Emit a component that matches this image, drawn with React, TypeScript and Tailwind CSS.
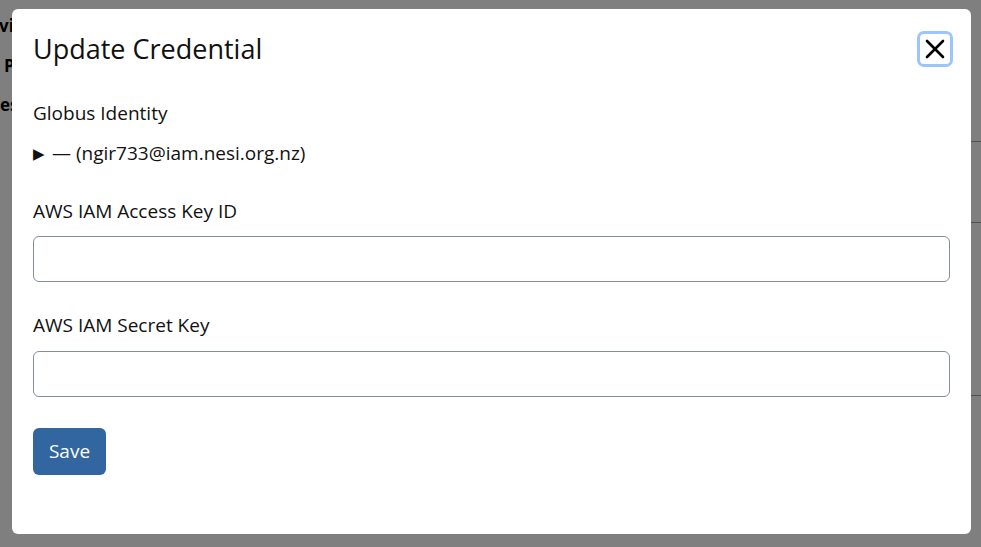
import React from "react";

export default function App() {
  const font = { fontFamily: "'Open Sans', 'Noto Sans', sans-serif" };
  return (
    <div className="relative h-[547px] w-[981px] overflow-hidden bg-white" style={font}>
      {/* underlying page */}
      <div className="flex flex-col text-[17px] font-bold text-black">
        <div className="ml-[-1px] mt-[16px] h-[20px] leading-[20px]">vi</div>
        <div className="ml-[4px] mt-[20px] h-[20px] leading-[20px]">P</div>
        <div className="ml-0 mt-[19px] h-[20px] leading-[20px]">es</div>
      </div>
      <div className="absolute left-[900px] top-[141px] w-[100px] border-t border-gray-400" />
      <div className="absolute left-[900px] top-[222px] w-[100px] border-t border-gray-400" />
      <div className="absolute left-[900px] top-[395px] w-[100px] border-t border-gray-400" />

      {/* overlay */}
      <div className="absolute inset-0 bg-black/50 pl-[12px] pr-[10px] pt-[9px]">
        <div className="flex h-[525px] w-[959px] flex-col rounded-[6px] bg-white px-[21px]">
          <div className="flex items-center justify-between pt-[22px]">
            <h1 className="text-[27px] leading-[34px] text-[#111]">Update Credential</h1>
            <button className="mr-[-3px] flex h-[36px] w-[36px] items-center justify-center rounded-[7px] border-[3px] border-[#9ec5fb]">
              <svg width="22" height="22" viewBox="0 0 22 22" fill="none" stroke="#000" strokeWidth="2.6" strokeLinecap="round">
                <path d="M3 3 L19 19 M19 3 L3 19" />
              </svg>
            </button>
          </div>
          <div className="mt-[34px] text-[19px] leading-[24px] text-[#111]">Globus Identity</div>
          <div className="mt-[16px] flex items-center text-[19px] leading-[24px] text-[#111]">
            <span className="mr-[7px] text-[15px]">▶</span>
            <span>— (ngir733@iam.nesi.org.nz)</span>
          </div>
          <div className="mt-[34px] text-[19px] leading-[24px] text-[#111]">AWS IAM Access Key ID</div>
          <input className="mt-[13px] h-[46px] w-full rounded-[6px] border border-[#868e9c] bg-white px-3 outline-none" />
          <div className="mt-[31px] text-[19px] leading-[24px] text-[#111]">AWS IAM Secret Key</div>
          <input className="mt-[14px] h-[46px] w-full rounded-[6px] border border-[#868e9c] bg-white px-3 outline-none" />
          <div className="mt-[31px]">
            <button className="h-[47px] w-[73px] rounded-[6px] bg-[#3166a1] text-[19px] text-white">Save</button>
          </div>
        </div>
      </div>
    </div>
  );
}
